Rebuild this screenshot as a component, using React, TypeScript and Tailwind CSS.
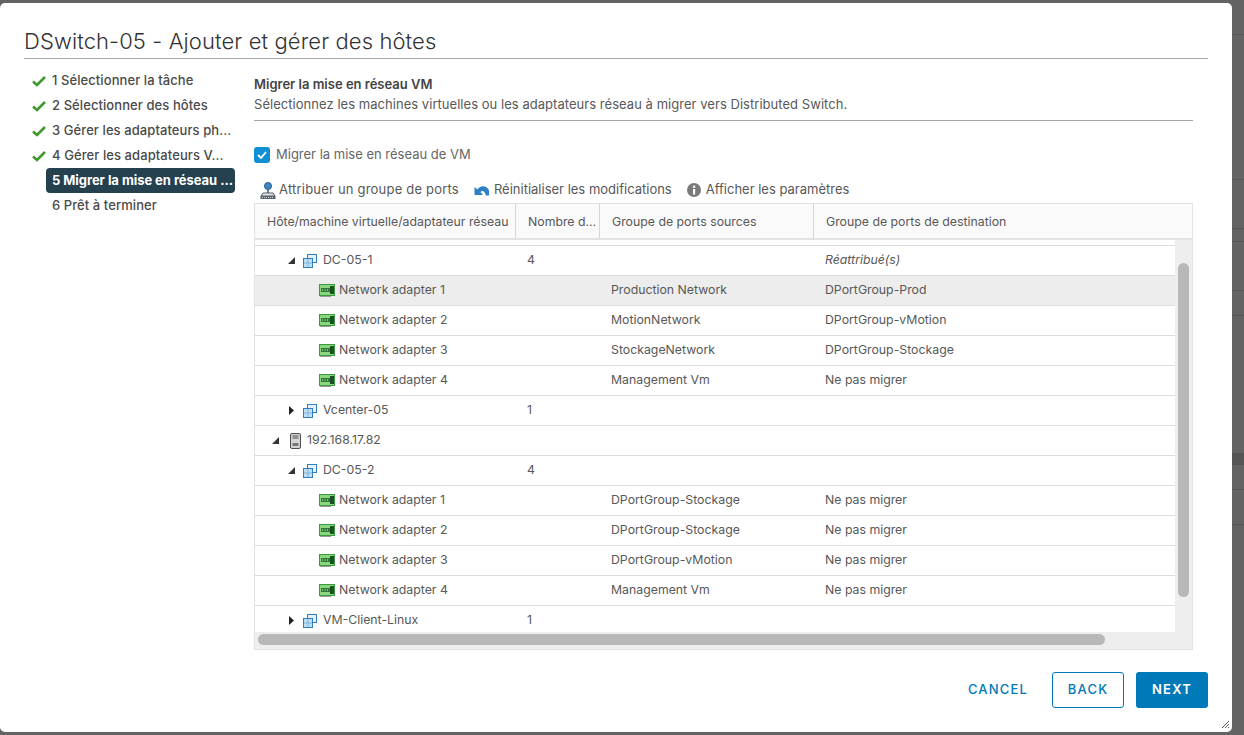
import React from 'react';

const font = { fontFamily: 'Inter, "Noto Sans", sans-serif' };

function CheckIcon() {
  return (
    <svg width="14" height="12" viewBox="0 0 14 12" className="shrink-0">
      <path d="M1 6.500 L5 10 L13 2" fill="none" stroke="#3f9a2c" strokeWidth="2.600" />
    </svg>
  );
}

function VmIcon() {
  return (
    <svg width="14" height="14" viewBox="0 0 14 14" className="shrink-0">
      <rect x="4.500" y="0.500" width="9" height="8" fill="#e3f1fa" stroke="#2f7fc0" />
      <rect x="0.500" y="4.500" width="9" height="9" fill="#bfdff3" stroke="#2f7fc0" />
      <path d="M5 5v8M1 9h8" stroke="#7fb6dc" strokeWidth="1" />
    </svg>
  );
}

function NicIcon() {
  return (
    <svg width="16" height="14" viewBox="0 0 16 14" className="shrink-0">
      <rect x="0" y="0" width="16" height="12" fill="#3c9a45" />
      <rect x="1" y="1" width="14" height="10" fill="#8ad87c" />
      <rect x="2" y="4" width="9" height="4" fill="#2f7a38" />
      <path d="M3 6h1M5.500 6h1M8 6h1" stroke="#d6f5cc" />
      <rect x="11" y="2" width="4" height="8" fill="#1d4f26" />
      <rect x="1" y="12" width="11" height="1" fill="#9a9a9a" />
    </svg>
  );
}

function HostIcon() {
  return (
    <svg width="11" height="16" viewBox="0 0 11 16" className="shrink-0">
      <rect x="0.500" y="0.500" width="10" height="15" rx="1.500" fill="#d4d4d4" stroke="#4d4d4d" />
      <path d="M2.500 3h6M2.500 5h6" stroke="#4d4d4d" />
      <rect x="2.500" y="10" width="6" height="3" fill="#777" />
    </svg>
  );
}

function ExpandedArrow() {
  return (
    <svg width="7" height="7" viewBox="0 0 7 7" className="shrink-0">
      <path d="M7 0V7H0Z" fill="#333" />
    </svg>
  );
}

function CollapsedArrow() {
  return (
    <svg width="5" height="9" viewBox="0 0 5 9" className="shrink-0">
      <path d="M0 0L5 4.500L0 9Z" fill="#222" />
    </svg>
  );
}

function AssignIcon() {
  return (
    <svg width="16" height="17" viewBox="0 0 16 17" className="shrink-0">
      <circle cx="8" cy="4" r="3.500" fill="#3f86c4" stroke="#235d91" />
      <path d="M7 8h2v3H7z" fill="#6f7f8c" />
      <path d="M3 11h10l2 3H1z" fill="#e4e8eb" stroke="#4f5a63" />
      <rect x="0.500" y="14" width="15" height="3" fill="#55636e" />
      <path d="M2 15.500h12" stroke="#cfd6da" strokeDasharray="1 1" />
    </svg>
  );
}

function ResetIcon() {
  return (
    <svg width="16" height="11" viewBox="0 0 16 11" className="shrink-0">
      <path d="M3.500 4.500C5.500 0.500 12.500 -0.500 15 5.500L15 10.500L11.800 10.500C11 6 8 5 6.500 7L9 10L0.500 10L0.500 2Z" fill="#2f7fc6" />
    </svg>
  );
}

function InfoIcon() {
  return (
    <svg width="14" height="14" viewBox="0 0 14 14" className="shrink-0">
      <circle cx="7" cy="7" r="7" fill="#7a7a7a" />
      <rect x="6" y="6" width="2.200" height="5.500" fill="#fff" />
      <circle cx="7.100" cy="3.800" r="1.300" fill="#fff" />
    </svg>
  );
}

const steps = [
  { label: '1 Sélectionner la tâche', done: true },
  { label: '2 Sélectionner des hôtes', done: true },
  { label: '3 Gérer les adaptateurs ph...', done: true },
  { label: '4 Gérer les adaptateurs V...', done: true },
  { label: '5 Migrer la mise en réseau ...', active: true },
  { label: '6 Prêt à terminer' },
];

type Row = {
  kind: 'vm' | 'vmClosed' | 'host' | 'nic';
  name: string;
  count?: string;
  source?: string;
  dest?: string;
  italic?: boolean;
  selected?: boolean;
};

const rows: Row[] = [
  { kind: 'vm', name: 'DC-05-1', count: '4', dest: 'Réattribué(s)', italic: true },
  { kind: 'nic', name: 'Network adapter 1', source: 'Production Network', dest: 'DPortGroup-Prod', selected: true },
  { kind: 'nic', name: 'Network adapter 2', source: 'MotionNetwork', dest: 'DPortGroup-vMotion' },
  { kind: 'nic', name: 'Network adapter 3', source: 'StockageNetwork', dest: 'DPortGroup-Stockage' },
  { kind: 'nic', name: 'Network adapter 4', source: 'Management Vm', dest: 'Ne pas migrer' },
  { kind: 'vmClosed', name: 'Vcenter-05', count: '1' },
  { kind: 'host', name: '192.168.17.82' },
  { kind: 'vm', name: 'DC-05-2', count: '4' },
  { kind: 'nic', name: 'Network adapter 1', source: 'DPortGroup-Stockage', dest: 'Ne pas migrer' },
  { kind: 'nic', name: 'Network adapter 2', source: 'DPortGroup-Stockage', dest: 'Ne pas migrer' },
  { kind: 'nic', name: 'Network adapter 3', source: 'DPortGroup-vMotion', dest: 'Ne pas migrer' },
  { kind: 'nic', name: 'Network adapter 4', source: 'Management Vm', dest: 'Ne pas migrer' },
  { kind: 'vmClosed', name: 'VM-Client-Linux', count: '1' },
];

function NameCell({ row }: { row: Row }) {
  if (row.kind === 'nic') {
    return (
      <div className="flex items-center gap-1 pl-[64px]">
        <NicIcon />
        <span>{row.name}</span>
      </div>
    );
  }
  if (row.kind === 'host') {
    return (
      <div className="flex items-center pl-[17px]">
        <ExpandedArrow />
        <span className="mr-[6px] ml-[11px] flex"><HostIcon /></span>
        <span>{row.name}</span>
      </div>
    );
  }
  return (
    <div className="flex items-center pl-[33px]">
      <span className="flex w-[7px] justify-center">
        {row.kind === 'vm' ? <ExpandedArrow /> : <CollapsedArrow />}
      </span>
      <span className="mr-[6px] ml-[8px] flex"><VmIcon /></span>
      <span>{row.name}</span>
    </div>
  );
}

export default function App() {
  return (
    <div className="flex h-[735px] w-[1244px] overflow-hidden bg-[#636363] text-[#585858]" style={font}>
      <div className="w-[1232px] shrink-0 pt-[3px]">
        <div className="flex h-[729px] w-[1232px] flex-col rounded-[5px] bg-white px-[24px]">
          <h1 className="mt-[22px] h-[33px] text-[22px] leading-[33px] font-light tracking-[0.1px] text-[#333]">
            DSwitch-05 - Ajouter et gérer des hôtes
          </h1>
          <div className="h-px w-[1184px] bg-[#a5a5a5]" />

          <div className="flex flex-1">
            {/* Steps */}
            <div className="-ml-[24px] w-[254px] shrink-0 pt-[9px]">
              {steps.map((s) => (
                <div key={s.label} className="flex h-[25px] items-center text-[13px] font-medium tracking-[0.08px] text-[#4a4a4a]">
                  <span className="flex w-[46px] justify-end">{s.done && <CheckIcon />}</span>
                  {s.active ? (
                    <span className="flex h-[25px] w-[189px] items-center rounded-[4px] bg-[#25404f] pl-[6px] font-bold tracking-[-0.05px] whitespace-nowrap text-white">
                      {s.label}
                    </span>
                  ) : (
                    <span className="pl-[6px] whitespace-nowrap">{s.label}</span>
                  )}
                </div>
              ))}
            </div>

            {/* Main */}
            <div className="w-[939px] shrink-0">
              <div className="mt-[15px] h-[20px] text-[13px] leading-[20px] font-semibold text-[#444]">
                Migrer la mise en réseau VM
              </div>
              <div className="h-[20px] text-[13px] leading-[20px] tracking-[0.04px]">
                Sélectionnez les machines virtuelles ou les adaptateurs réseau à migrer vers Distributed Switch.
              </div>
              <div className="mt-[6px] h-px w-[939px] bg-[#a5a5a5]" />

              <div className="mt-[25px] flex h-[18px] items-center gap-[6px] text-[13px] text-[#666]">
                <span className="flex h-[16px] w-[16px] items-center justify-center rounded-[3px] bg-[#0f8fd6]">
                  <svg width="10" height="8" viewBox="0 0 10 8">
                    <path d="M1 4L4 7L9 1" fill="none" stroke="#fff" strokeWidth="1.800" />
                  </svg>
                </span>
                Migrer la mise en réseau de VM
              </div>

              <div className="mt-[16px] flex h-[20px] items-center pl-[6px] text-[13px]">
                <AssignIcon />
                <span className="ml-[3px] tracking-[0.2px]">Attribuer un groupe de ports</span>
                <span className="ml-[15px] flex"><ResetIcon /></span>
                <span className="ml-[4px]">Réinitialiser les modifications</span>
                <span className="ml-[15px] flex"><InfoIcon /></span>
                <span className="ml-[5px]">Afficher les paramètres</span>
              </div>

              {/* Table */}
              <div className="mt-[3px] h-[447px] w-[939px] border border-b-2 border-[#e3e3e3] text-[12.300px]">
                <div className="grid h-[36px] grid-cols-[261px_84px_214px_1fr] border-b-2 border-[#e3e3e3] bg-[#fafafa]">
                  <div className="flex items-center border-r border-[#d5d5d5] pt-[2px] pl-[12px] whitespace-nowrap">Hôte/machine virtuelle/adaptateur réseau</div>
                  <div className="flex items-center border-r border-[#d5d5d5] pt-[2px] pl-[12px] whitespace-nowrap">Nombre d...</div>
                  <div className="flex items-center border-r border-[#d5d5d5] pt-[2px] pl-[12px]">Groupe de ports sources</div>
                  <div className="flex items-center pt-[2px] pl-[12px]">Groupe de ports de destination</div>
                </div>

                <div className="flex h-[392px]">
                  <div className="w-[920px] shrink-0 overflow-hidden">
                    <div className="h-[6px] border-b border-[#dcdcdc]" />
                    {rows.map((r, i) => (
                      <div
                        key={i}
                        className={`grid h-[30px] grid-cols-[261px_84px_214px_1fr] items-center border-b border-[#dedede] ${r.selected ? 'bg-[#ededed]' : 'bg-white'}`}
                      >
                        <NameCell row={r} />
                        <div className="pl-[11px]">{r.count}</div>
                        <div className="pl-[11px]">{r.source}</div>
                        <div className={`pl-[11px] ${r.italic ? 'italic' : ''}`}>{r.dest}</div>
                      </div>
                    ))}
                  </div>
                  <div className="flex-1 bg-[#eeeeee] px-[3px] pt-[23px]">
                    <div className="h-[334px] w-[11px] rounded-full bg-[#b8b8b8]" />
                  </div>
                </div>

                <div className="h-[17px] bg-[#eeeeee] pt-[2px] pl-[3px]">
                  <div className="h-[11px] w-[847px] rounded-full bg-[#b8b8b8]" />
                </div>
              </div>
            </div>
          </div>

          {/* Footer */}
          <div className="relative mb-[24px] flex justify-end gap-[12px] text-[13px] font-medium tracking-[1.200px]">
            <button className="h-[36px] w-[84px] text-[#0079b8]">CANCEL</button>
            <button className="h-[36px] w-[72px] rounded-[3px] border border-[#0079b8] text-[#0079b8]">BACK</button>
            <button className="h-[36px] w-[72px] rounded-[3px] bg-[#0079b8] font-semibold text-white">NEXT</button>
            <svg width="9" height="9" viewBox="0 0 9 9" className="absolute -right-[22px] bottom-[-21px]">
              <path d="M1 8L8 1M4 8L8 4M7 8L8 7" stroke="#555" strokeWidth="1" />
            </svg>
          </div>
        </div>
      </div>

      {/* Page behind the dialog, dimmed */}
      <div className="flex-1">
        <div className="h-[35px] border-b border-[#575757]" />
        <div className="h-[145px] border-b border-[#575757]" />
        <div className="h-[49px] border-b border-[#535353]" />
        <div className="h-[13px] border-b border-[#575757]" />
        <div className="h-[49px] border-b border-[#575757]" />
        <div className="h-[25px] border-b border-[#535353]" />
        <div className="h-[137px]" />
        <div className="h-[12px] bg-[#555555]" />
        <div className="h-[25px] border-b border-[#575757]" />
        <div className="h-[35px] border-b border-[#535353]" />
      </div>
    </div>
  );
}
